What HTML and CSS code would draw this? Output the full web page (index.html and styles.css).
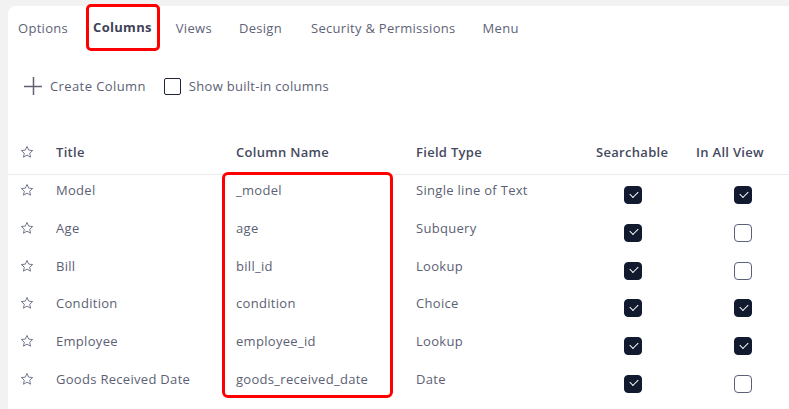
FILE: index.html
```html
<!DOCTYPE html>
<html>
<head>
<meta charset="utf-8">
<link rel="stylesheet" href="styles.css">
</head>
<body>
<div class="card">
  <nav class="tabs">
    <span class="tab">Options</span>
    <span class="tab active">Columns</span>
    <span class="tab">Views</span>
    <span class="tab">Design</span>
    <span class="tab">Security &amp; Permissions</span>
    <span class="tab">Menu</span>
  </nav>
  <div class="toolbar">
    <span class="create">
      <svg class="plus" width="18" height="18" viewBox="0 0 18 18"><path d="M0 9.5H18M9.5 0V18" stroke="#5f6270" stroke-width="1.5" fill="none"/></svg>
      Create Column
    </span>
    <label class="show"><span class="box"></span>Show built-in columns</label>
  </div>
  <div class="table">
    <div class="row head">
      <span class="star"><svg width="14" height="14" viewBox="0 0 24 24"><path d="M12 2.5l2.9 6.3 6.8.7-5.1 4.6 1.5 6.8L12 17.4l-6.1 3.5 1.5-6.8-5.1-4.6 6.8-.7z" fill="none" stroke="#6b6f86" stroke-width="1.6" stroke-linejoin="round"/></svg></span>
      <span>Title</span>
      <span>Column Name</span>
      <span>Field Type</span>
      <span class="c-search">Searchable</span>
      <span class="c-view">In All View</span>
    </div>
    <div class="row">
      <span class="star"><svg width="14" height="14" viewBox="0 0 24 24"><path d="M12 2.5l2.9 6.3 6.8.7-5.1 4.6 1.5 6.8L12 17.4l-6.1 3.5 1.5-6.8-5.1-4.6 6.8-.7z" fill="none" stroke="#6b6f86" stroke-width="1.6" stroke-linejoin="round"/></svg></span>
      <span>Model</span><span>_model</span><span>Single line of Text</span>
      <span class="cb-s"><span class="cb on"></span></span><span class="cb-v"><span class="cb on"></span></span>
    </div>
    <div class="row">
      <span class="star"><svg width="14" height="14" viewBox="0 0 24 24"><path d="M12 2.5l2.9 6.3 6.8.7-5.1 4.6 1.5 6.8L12 17.4l-6.1 3.5 1.5-6.8-5.1-4.6 6.8-.7z" fill="none" stroke="#6b6f86" stroke-width="1.6" stroke-linejoin="round"/></svg></span>
      <span>Age</span><span>age</span><span>Subquery</span>
      <span class="cb-s"><span class="cb on"></span></span><span class="cb-v"><span class="cb"></span></span>
    </div>
    <div class="row">
      <span class="star"><svg width="14" height="14" viewBox="0 0 24 24"><path d="M12 2.5l2.9 6.3 6.8.7-5.1 4.6 1.5 6.8L12 17.4l-6.1 3.5 1.5-6.8-5.1-4.6 6.8-.7z" fill="none" stroke="#6b6f86" stroke-width="1.6" stroke-linejoin="round"/></svg></span>
      <span>Bill</span><span>bill_id</span><span>Lookup</span>
      <span class="cb-s"><span class="cb on"></span></span><span class="cb-v"><span class="cb"></span></span>
    </div>
    <div class="row">
      <span class="star"><svg width="14" height="14" viewBox="0 0 24 24"><path d="M12 2.5l2.9 6.3 6.8.7-5.1 4.6 1.5 6.8L12 17.4l-6.1 3.5 1.5-6.8-5.1-4.6 6.8-.7z" fill="none" stroke="#6b6f86" stroke-width="1.6" stroke-linejoin="round"/></svg></span>
      <span>Condition</span><span>condition</span><span>Choice</span>
      <span class="cb-s"><span class="cb on"></span></span><span class="cb-v"><span class="cb on"></span></span>
    </div>
    <div class="row">
      <span class="star"><svg width="14" height="14" viewBox="0 0 24 24"><path d="M12 2.5l2.9 6.3 6.8.7-5.1 4.6 1.5 6.8L12 17.4l-6.1 3.5 1.5-6.8-5.1-4.6 6.8-.7z" fill="none" stroke="#6b6f86" stroke-width="1.6" stroke-linejoin="round"/></svg></span>
      <span>Employee</span><span>employee_id</span><span>Lookup</span>
      <span class="cb-s"><span class="cb on"></span></span><span class="cb-v"><span class="cb on"></span></span>
    </div>
    <div class="row">
      <span class="star"><svg width="14" height="14" viewBox="0 0 24 24"><path d="M12 2.5l2.9 6.3 6.8.7-5.1 4.6 1.5 6.8L12 17.4l-6.1 3.5 1.5-6.8-5.1-4.6 6.8-.7z" fill="none" stroke="#6b6f86" stroke-width="1.6" stroke-linejoin="round"/></svg></span>
      <span>Goods Received Date</span><span>goods_received_date</span><span>Date</span>
      <span class="cb-s"><span class="cb on"></span></span><span class="cb-v"><span class="cb"></span></span>
    </div>
    <div class="highlight"></div>
  </div>
</div>
</body>
</html>
```
FILE: styles.css
```css
* { box-sizing: border-box; }
html, body { margin: 0; }
body {
  background: #f2f2f2;
  padding: 6px 0 0 8px;
  font-family: "Open Sans", "Liberation Sans", sans-serif;
  font-size: 13px;
  letter-spacing: 0.3px;
  color: #5c5f74;
  overflow: hidden;
  height: 409px;
}
.card {
  background: #fff;
  border-top-left-radius: 8px;
  height: 420px;
}
.tabs {
  display: flex;
  align-items: center;
  height: 43px;
  padding-left: 10px;
  gap: 25px;
  color: #606378;
}
.tab { white-space: nowrap; }
.tab:nth-child(4) { margin-left: 2px; }
.tab:nth-child(5) { margin-left: 4px; }
.tab:nth-child(6) { margin-left: 2px; }
.tab.active {
  font-weight: 700;
  color: #3f4358;
  border: 3px solid #f00;
  border-radius: 5px;
  padding: 11px 5px 12px 4px;
  margin: -1px -9px 0 -7px;
}
.toolbar {
  display: flex;
  align-items: center;
  height: 30px;
  margin-top: 22px;
  padding-left: 16px;
  gap: 18px;
}
.create { display: flex; align-items: center; gap: 8px; letter-spacing: 0.4px; }
.show { display: flex; align-items: center; gap: 8px; }
.box {
  width: 17px; height: 17px;
  border: 1.5px solid #1f2438;
  border-radius: 2px;
}
.table {
  position: relative;
  margin-top: 28px;
}
.row {
  display: grid;
  grid-template-columns: 36px 180px 180px 180px 100px 1fr;
  padding-left: 12px;
  height: 37.8px;
  padding-top: 6px;
  align-items: start;
}
.row.head {
  height: 46px;
  padding-top: 14px;
  font-weight: 600;
  color: #454a5e;
  border-bottom: 1px solid #ececf0;
}
.star { display: flex; padding-top: 2px; }
.cb-s { padding: 5px 0 0 28px; }
.cb-v { padding: 5px 0 0 38px; }
.cb {
  display: block;
  width: 18px; height: 18px;
  border: 1.5px solid #5b6079;
  border-radius: 4px;
  background: #fff;
  position: relative;
}
.cb.on {
  background: #111a2e;
  border-color: #111a2e;
}
.cb.on::after {
  content: "";
  position: absolute;
  left: 4.5px; top: 3.5px;
  width: 7px; height: 4px;
  border-left: 1.5px solid #fff;
  border-bottom: 1.5px solid #fff;
  transform: rotate(-45deg);
}
.highlight {
  position: absolute;
  left: 214px;
  top: 43px;
  width: 171px;
  height: 226px;
  border: 3px solid #f00;
  border-radius: 6px;
  pointer-events: none;
}
```
